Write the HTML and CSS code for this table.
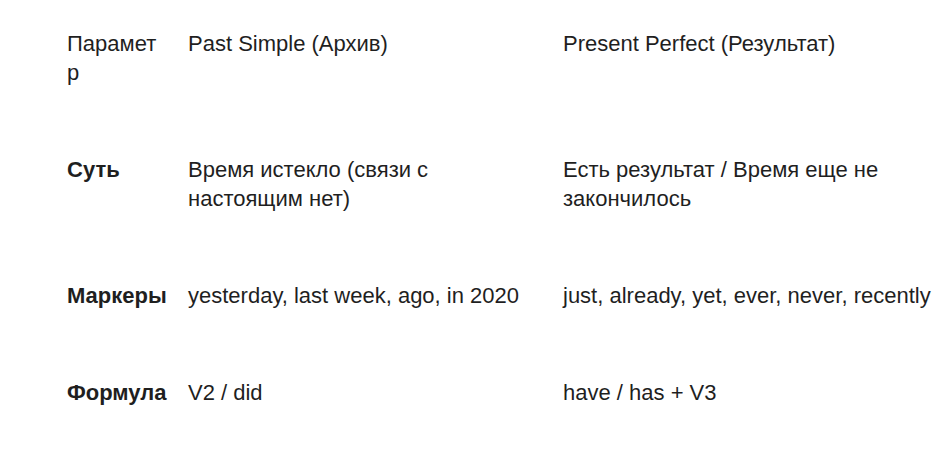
FILE: index.html
```html
<!DOCTYPE html>
<html lang="ru">
<head>
<meta charset="utf-8">
<link rel="stylesheet" href="styles.css">
</head>
<body>
<div class="table">
  <div class="cell head">Параметр</div>
  <div class="cell">Past Simple (Архив)</div>
  <div class="cell last">Present Perfect (Результат)</div>

  <div class="cell label">Суть</div>
  <div class="cell">Время истекло (связи с настоящим нет)</div>
  <div class="cell last">Есть результат / Время еще не закончилось</div>

  <div class="cell label">Маркеры</div>
  <div class="cell">yesterday, last week, ago, in 2020</div>
  <div class="cell last">just, already, yet, ever, never, recently</div>

  <div class="cell label">Формула</div>
  <div class="cell">V2 / did</div>
  <div class="cell last">have / has + V3</div>
</div>
</body>
</html>
```
FILE: styles.css
```css
html, body {
  margin: 0;
  padding: 0;
  background: #ffffff;
}
body {
  font-family: "Liberation Sans", Arial, sans-serif;
  font-size: 22px;
  line-height: 29px;
  color: #1f1f1f;
}
.table {
  display: grid;
  grid-template-columns: 100px 345px 1fr;
  column-gap: 21px;
  row-gap: 68px;
  padding: 29px 0 0 67px;
}
.last {
  margin-left: 9px;
}
.head {
  overflow-wrap: anywhere;
}
.label {
  font-weight: bold;
}
```
